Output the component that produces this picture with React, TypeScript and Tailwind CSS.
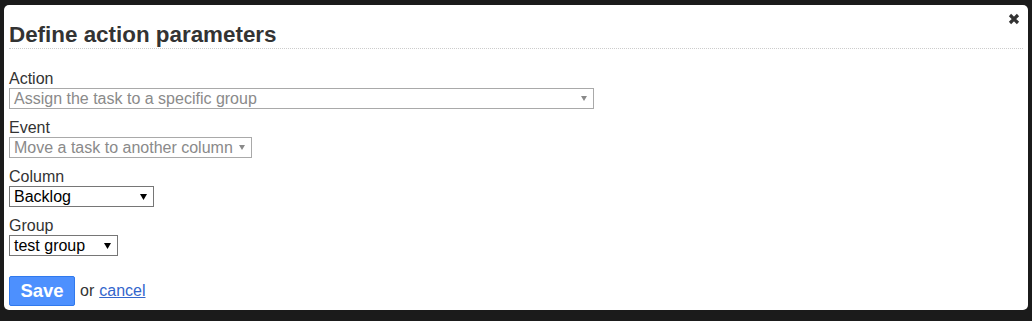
import React from 'react';

const FONT = { fontFamily: '"Liberation Sans", Arial, sans-serif' };

type SelectProps = { value: string; width: string; disabled?: boolean };

function FakeSelect({ value, width, disabled }: SelectProps) {
  return (
    <div
      className={`${width} h-[21px] flex items-center justify-between pl-[4px] pr-[6px] border text-[16px] leading-[19px] bg-white ${
        disabled ? 'border-[#a9a9a9] text-[#8a8a8a]' : 'border-[#767676] text-black'
      }`}
    >
      <span className="whitespace-nowrap">{value}</span>
      {disabled ? (
        <svg width="6" height="5" viewBox="0 0 6 5" className="shrink-0">
          <path d="M0 0h6L3 5z" fill="#8a8a8a" />
        </svg>
      ) : (
        <svg width="7" height="6" viewBox="0 0 7 6" className="shrink-0">
          <path d="M0 0h7L3.5 6z" fill="#000" />
        </svg>
      )}
    </div>
  );
}

function Field({ label, children }: { label: string; children: React.ReactNode }) {
  return (
    <div className="mb-[10px]">
      <div className="text-[16px] leading-[18px] text-[#333]">{label}</div>
      {children}
    </div>
  );
}

export default function App() {
  return (
    <div className="w-[1032px] h-[321px] bg-[#1b1b1b] pt-[5px] pl-[4px]" style={FONT}>
      <div className="relative w-[1024px] h-[305px] bg-white rounded-[5px] pt-[17px] px-[5px]">
        {/* close */}
        <button className="absolute top-[8px] right-[8px] w-[12px] h-[12px] flex items-center justify-center">
          <svg width="12" height="12" viewBox="0 0 12 12">
            <path d="M2 2l8 8M10 2l-8 8" stroke="#333" strokeWidth="3.2" />
          </svg>
        </button>

        <h2 className="text-[22.4px] leading-[26px] font-bold text-[#333] border-b border-dotted border-[#ccc] mb-[21px]">
          Define action parameters
        </h2>

        <Field label="Action">
          <FakeSelect value="Assign the task to a specific group" width="w-[585px]" disabled />
        </Field>
        <Field label="Event">
          <FakeSelect value="Move a task to another column" width="w-[243px]" disabled />
        </Field>
        <Field label="Column">
          <FakeSelect value="Backlog" width="w-[145px]" />
        </Field>
        <Field label="Group">
          <FakeSelect value="test group" width="w-[109px]" />
        </Field>

        <div className="flex items-center pt-[10px] text-[16px] text-[#333]">
          <button className="w-[66px] h-[30px] bg-[#4d90fe] border border-[#3079ed] rounded-[2px] text-white text-[18.5px] font-bold leading-[28px]">
            Save
          </button>
          <span className="ml-[5px]">or</span>
          <a href="#" className="ml-[5px] text-[#36c] underline">
            cancel
          </a>
        </div>
      </div>
    </div>
  );
}
